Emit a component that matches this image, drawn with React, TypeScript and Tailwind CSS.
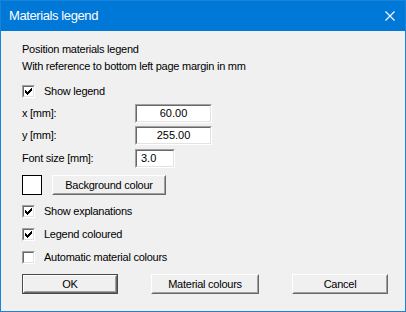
import React from "react";

const font = { fontFamily: '"Liberation Sans", Arial, sans-serif' };

function Check({ checked }: { checked?: boolean }) {
	return (
		<span className="flex h-[13px] w-[13px] shrink-0 items-center justify-center border border-t-[#a0a0a0] border-l-[#a0a0a0] border-b-white border-r-white bg-white">
			<span className="flex h-[11px] w-[11px] items-center justify-center border border-t-[#696969] border-l-[#696969] border-b-[#e3e3e3] border-r-[#e3e3e3]">
				{checked && (
					<svg width="7" height="7" viewBox="0 0 7 7" shapeRendering="crispEdges">
						<path d="M0 2h1v3h-1z M1 3h1v3h-1z M2 4h1v3h-1z M3 3h1v3h-1z M4 2h1v3h-1z M5 1h1v3h-1z M6 0h1v3h-1z" fill="#000" />
					</svg>
				)}
			</span>
		</span>
	);
}

function CheckRow({ label, checked }: { label: string; checked?: boolean }) {
	return (
		<div className="flex h-[13px] items-center">
			<Check checked={checked} />
			<span className="ml-[9px] text-[11px] leading-[13px] tracking-[-0.25px] text-black">{label}</span>
		</div>
	);
}

function Field({ label, value, wide = true, center = true }: { label: string; value: string; wide?: boolean; center?: boolean }) {
	return (
		<div className="flex items-center">
			<span className="w-[113px] text-[11px] tracking-[-0.25px] text-black">{label}</span>
			<div
				className={`h-[19px] border border-t-[#a0a0a0] border-l-[#a0a0a0] border-b-white border-r-white ${wide ? "w-[77px]" : "w-[40px]"}`}
			>
				<div
					className={`flex h-full items-center border border-t-[#696969] border-l-[#696969] border-b-[#e3e3e3] border-r-[#e3e3e3] bg-white text-[11px] text-black ${center ? "justify-center" : "pl-[4px]"}`}
				>
					{value}
				</div>
			</div>
		</div>
	);
}

function Button({ label, width, isDefault }: { label: string; width: string; isDefault?: boolean }) {
	return (
		<div className={`${width} h-[20px] ${isDefault ? "border border-[#4a4a4a]" : ""}`}>
			<div className="h-full border border-t-white border-l-white border-b-[#696969] border-r-[#696969]">
				<div className="flex h-full items-center justify-center border border-t-[#f0f0f0] border-l-[#f0f0f0] border-b-[#a0a0a0] border-r-[#a0a0a0] bg-[#f0f0f0] text-[11px] tracking-[-0.25px] text-black">
					{label}
				</div>
			</div>
		</div>
	);
}

export default function App() {
	return (
		<div className="flex h-[312px] w-[406px] flex-col border border-[#1883d7] bg-[#f0f0f0]" style={font}>
			<div className="flex h-[30px] shrink-0 items-center justify-between bg-[#0078d7] pl-[8px] pr-[10px]">
				<span className="text-[13px] tracking-[-0.4px] text-white">Materials legend</span>
				<svg width="10" height="10" viewBox="0 0 10 10">
					<path d="M0.5 0.5L9.5 9.5M9.5 0.5L0.5 9.5" stroke="#fff" strokeWidth="1.1" />
				</svg>
			</div>

			<div className="flex flex-col pl-[21px] pr-[17px] pt-[10px]">
				<div className="text-[11px] leading-[17px] tracking-[-0.25px] text-black">
					<div>Position materials legend</div>
					<div>With reference to bottom left page margin in mm</div>
				</div>

				<div className="mt-[10px]">
					<CheckRow label="Show legend" checked />
				</div>

				<div className="mt-[6px] flex flex-col gap-[3px]">
					<Field label="x [mm]:" value="60.00" />
					<Field label="y [mm]:" value="255.00" />
					<div className="mt-[1px]">
						<Field label="Font size [mm]:" value="3.0" wide={false} center={false} />
					</div>
				</div>

				<div className="mt-[7px] flex items-center">
					<div className="h-[20px] w-[20px] border border-black bg-white" />
					<div className="ml-[10px]">
						<Button label="Background colour" width="w-[114px]" />
					</div>
				</div>

				<div className="mt-[10px] flex flex-col gap-[10px]">
					<CheckRow label="Show explanations" checked />
					<CheckRow label="Legend coloured" checked />
					<CheckRow label="Automatic material colours" />
				</div>

				<div className="mt-[10px] flex items-center justify-between">
					<Button label="OK" width="w-[96px]" isDefault />
					<Button label="Material colours" width="w-[108px]" />
					<Button label="Cancel" width="w-[96px]" />
				</div>
			</div>
		</div>
	);
}
